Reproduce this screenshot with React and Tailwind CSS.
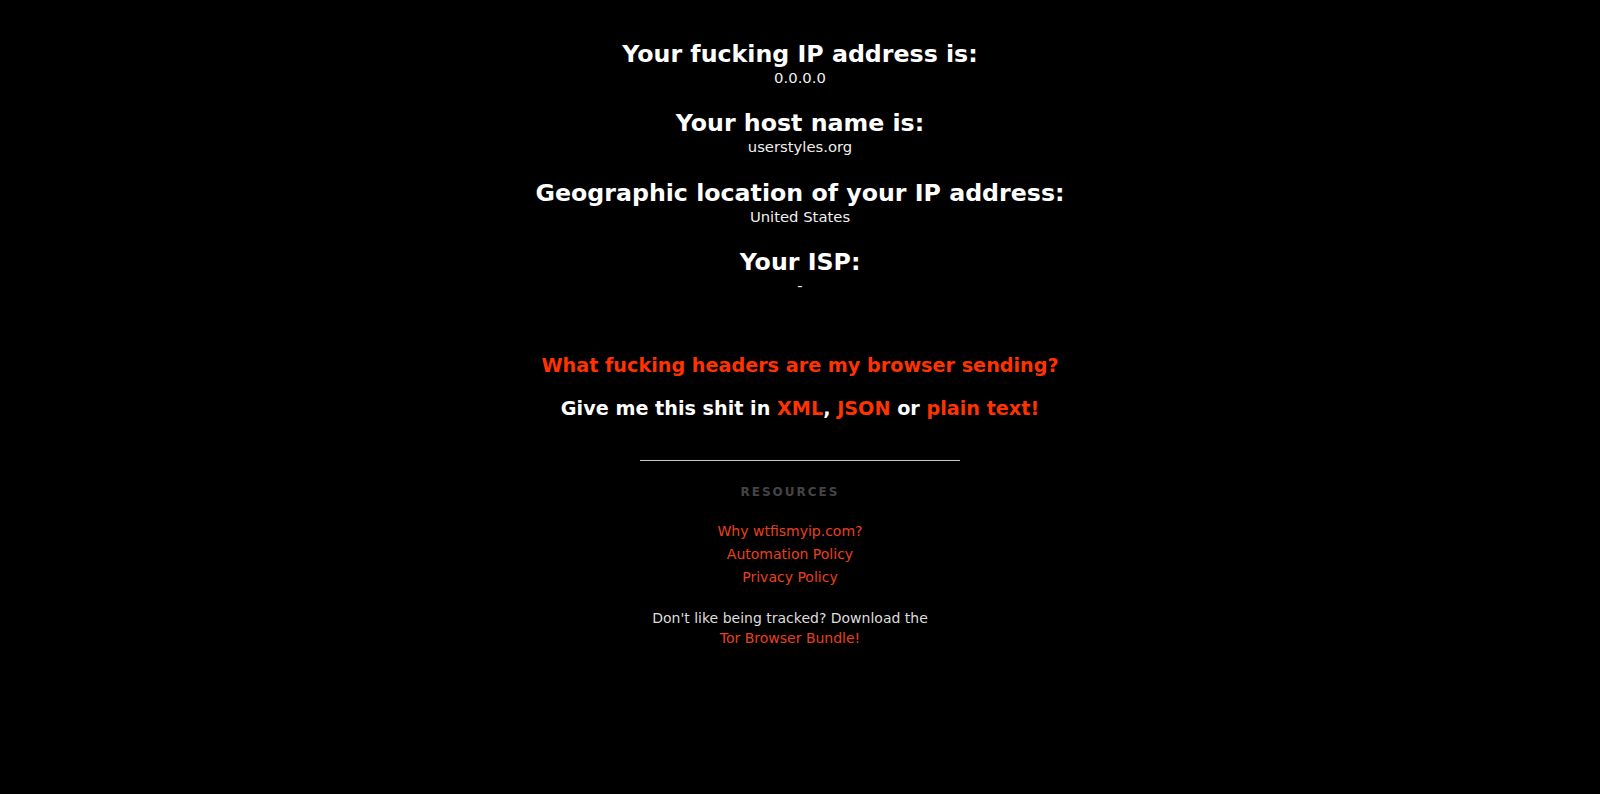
import React from 'react'

const info = [
  { label: 'Your fucking IP address is:', value: '0.0.0.0' },
  { label: 'Your host name is:', value: 'userstyles.org' },
  { label: 'Geographic location of your IP address:', value: 'United States' },
  { label: 'Your ISP:', value: '-' },
]

const links = ['Why wtfismyip.com?', 'Automation Policy', 'Privacy Policy']

export default function App() {
  return (
    <div className="min-h-screen bg-black pt-[40px] text-center font-['DejaVu_Sans',sans-serif]">
      {/* IP details */}
      {info.map((item) => (
        <div key={item.label} className="mb-[21.4px]">
          <h2 className="text-[23.7px] leading-[28px] font-bold text-white">{item.label}</h2>
          <p className="text-[14.8px] leading-[20px] text-[#efefef]">{item.value}</p>
        </div>
      ))}

      {/* Headers */}
      <h3 className="mt-[57.6px] text-[19.2px] leading-[23px] font-bold text-[#ff3300]">
        <a href="#">What fucking headers are my browser sending?</a>
      </h3>
      <h3 className="mt-[20.2px] text-[19.2px] leading-[23px] font-bold text-white">
        Give me this shit in <a href="#" className="text-[#ff3300]">XML</a>,{' '}
        <a href="#" className="text-[#ff3300]">JSON</a> or{' '}
        <a href="#" className="text-[#ff3300]">plain text!</a>
      </h3>

      <hr className="mx-auto mt-[40px] w-[320px] border-0 border-t border-[#c8c8c8]" />

      {/* Footer */}
      <div className="pr-[20px]">
        <div className="mt-[24.5px] text-[12px] leading-[14px] font-bold tracking-[2px] text-[#444444]">
          RESOURCES
        </div>
        <ul className="mt-[20.5px]">
          {links.map((l) => (
            <li key={l} className="text-[14px] leading-[23px]">
              <a href="#" className="text-[#e8401c]">{l}</a>
            </li>
          ))}
        </ul>
        <p className="mt-[19px] text-[14px] leading-[20.5px] text-[#dddddd]">
          Don't like being tracked? Download the
          <br />
          <a href="#" className="text-[#e8401c]">Tor Browser Bundle!</a>
        </p>
      </div>
    </div>
  )
}
